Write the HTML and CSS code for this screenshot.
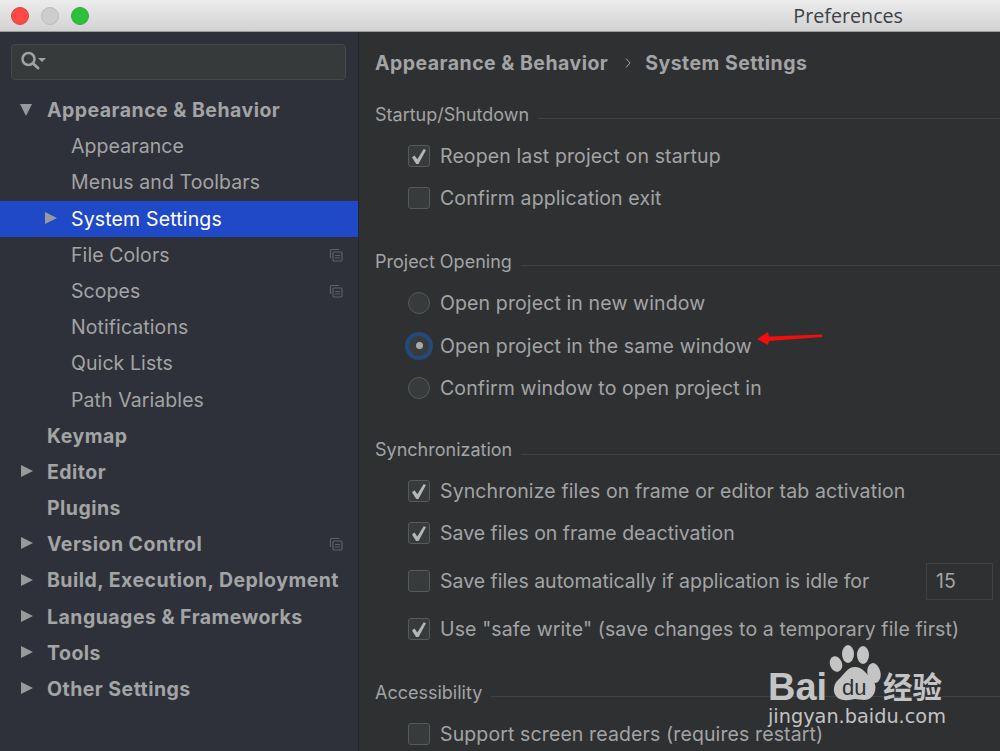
FILE: index.html
```html
<!DOCTYPE html>
<html lang="en">
<head>
<meta charset="utf-8">
<title>Preferences</title>
<link rel="stylesheet" href="styles.css">
</head>
<body>
<div class="window">
  <header class="titlebar">
    <div class="lights"><span class="light red"></span><span class="light grey"></span><span class="light green"></span></div>
    <div class="title">Preferences</div>
  </header>
  <div class="body">
    <aside class="sidebar">
      <div class="search">
        <svg class="search-icon" width="28" height="20" viewBox="0 0 28 20"><circle cx="7.500" cy="8" r="6" fill="none" stroke="#a0a2a3" stroke-width="2.500"/><path d="M12 12.500l5 4.500" stroke="#a0a2a3" stroke-width="3" stroke-linecap="round"/><path d="M17 7h8l-4 4z" fill="#a0a2a3"/></svg>
      </div>
      <nav class="tree">
        <div class="row top"><span class="arrow down"></span>Appearance &amp; Behavior</div>
        <div class="row sub">Appearance</div>
        <div class="row sub">Menus and Toolbars</div>
        <div class="row sub selected"><span class="arrow right"></span>System Settings</div>
        <div class="row sub">File Colors<svg class="copy" width="14" height="14" viewBox="0 0 14 14"><use href="#copy"/></svg></div>
        <div class="row sub">Scopes<svg class="copy" width="14" height="14" viewBox="0 0 14 14"><use href="#copy"/></svg></div>
        <div class="row sub">Notifications</div>
        <div class="row sub">Quick Lists</div>
        <div class="row sub">Path Variables</div>
        <div class="row top">Keymap</div>
        <div class="row top"><span class="arrow right"></span>Editor</div>
        <div class="row top">Plugins</div>
        <div class="row top"><span class="arrow right"></span>Version Control<svg class="copy" width="14" height="14" viewBox="0 0 14 14"><use href="#copy"/></svg></div>
        <div class="row top"><span class="arrow right"></span>Build, Execution, Deployment</div>
        <div class="row top"><span class="arrow right"></span>Languages &amp; Frameworks</div>
        <div class="row top"><span class="arrow right"></span>Tools</div>
        <div class="row top"><span class="arrow right"></span>Other Settings</div>
      </nav>
    </aside>
    <main class="content">
      <div class="crumbs"><span>Appearance &amp; Behavior</span><svg class="sep" width="6" height="12" viewBox="0 0 6 12"><path d="M1 1.500l4 4.500-4 4.500" fill="none" stroke="#a0a2a3" stroke-width="1"/></svg><span>System Settings</span></div>

      <section class="group first">
        <h2 class="heading"><span>Startup/Shutdown</span></h2>
        <div class="opt"><span class="check on"></span>Reopen last project on startup</div>
        <div class="opt"><span class="check"></span>Confirm application exit</div>
      </section>

      <section class="group opening">
        <h2 class="heading"><span>Project Opening</span></h2>
        <div class="opt"><span class="radio"></span>Open project in new window</div>
        <div class="opt"><span class="radio sel"></span>Open project in the same window<svg class="red-arrow" width="66" height="13" viewBox="0 0 66 13"><path d="M0 7L11 0l1 4.500L65 2.500l.500 2.500L12 9l-1 4z" fill="#f30d0d"/></svg></div>
        <div class="opt"><span class="radio"></span>Confirm window to open project in</div>
      </section>

      <section class="group sync">
        <h2 class="heading"><span>Synchronization</span></h2>
        <div class="opt"><span class="check on"></span>Synchronize files on frame or editor tab activation</div>
        <div class="opt tight"><span class="check on"></span>Save files on frame deactivation</div>
        <div class="opt idle tight"><span class="check"></span>Save files automatically if application is idle for<span class="num">15</span></div>
        <div class="opt safe"><span class="check on"></span>Use "safe write" (save changes to a temporary file first)</div>
      </section>

      <section class="group access">
        <h2 class="heading"><span>Accessibility</span></h2>
        <div class="opt"><span class="check"></span>Support screen readers (requires restart)</div>
      </section>
    </main>
  </div>
  <div class="watermark">
    <svg class="paw" width="52" height="58" viewBox="0 0 52 58"><g fill="#c4c4c4"><ellipse cx="7" cy="19" rx="6" ry="8" transform="rotate(-20 7 19)"/><ellipse cx="19" cy="9" rx="6" ry="9"/><ellipse cx="34" cy="10" rx="6" ry="9"/><ellipse cx="45" cy="28" rx="6.500" ry="10" transform="rotate(-12 45 28)"/><path d="M26 22c8 0 11 7 17 12 7 7 3 21-8 21-4 0-6-1-9-1s-6 2-11 1C4 54 2 42 9 35c6-5 9-13 17-13z"/></g></svg>
    <span class="wm-bai">Bai</span><span class="wm-du">du</span><span class="wm-cn">经验</span>
    <span class="wm-url">jingyan.baidu.com</span>
  </div>
</div>
<svg class="defs" width="0" height="0"><defs><g id="copy" fill="none" stroke="#5d6065" stroke-width="1.200"><path d="M10 1.500H2.500a1 1 0 0 0-1 1V10"/><rect x="4" y="4" width="9" height="9" rx="1"/><path d="M6 7.500h5M6 10h5"/></g></defs></svg>
</body>
</html>
```

FILE: styles.css
```css
* { box-sizing: border-box; }
html, body { margin: 0; height: 100%; }
body { font-family: Inter, "Liberation Sans", sans-serif; overflow: hidden; background: #2f3032; }
.window { position: relative; width: 1000px; height: 751px; overflow: hidden; display: flex; flex-direction: column; }

.titlebar { height: 32px; flex: none; position: relative; display: flex; align-items: center; padding-left: 11px; background: linear-gradient(#ececec, #d2d2d2); border-bottom: 1px solid #9a9a9a; }
.lights { display: flex; gap: 12px; }
.light { width: 18px; height: 18px; border-radius: 50%; }
.red { background: #fc4a46; border: 1px solid #e2403c; }
.grey { background: #cdcdcd; border: 1px solid #bcbcbc; }
.green { background: #2cc13a; border: 1px solid #28ae33; }
.title { margin-left: auto; margin-right: 97px; font-size: 19.700px; color: #3d4045; font-family: "Open Sans", sans-serif; line-height: 31px; }

.body { flex: 1; display: flex; min-height: 0; }
.sidebar { width: 359px; flex: none; background: #2e3139; border-right: 1px solid #24262a; padding-top: 12px; }
.search { margin: 0 12px 0 11px; height: 36px; border: 1px solid #46494a; border-radius: 4px; background: #373a3b; padding: 6px 0 0 9px; }
.search-icon { display: block; }
.tree { margin-top: 12px; }
.row { position: relative; height: 36.200px; line-height: 36.200px; font-size: 19.500px; color: #a3a4a5; white-space: nowrap; letter-spacing: .08px; }
.row.top { padding-left: 47px; font-weight: 700; letter-spacing: .47px; }
.row.sub { padding-left: 71px; }
.row.selected { background: #2049c7; color: #fff; letter-spacing: .16px; }
.arrow { position: absolute; top: 50%; width: 0; height: 0; }
.arrow.right { border-left: 12px solid #97999b; border-top: 6.500px solid transparent; border-bottom: 6.500px solid transparent; margin-top: -7px; left: 21px; }
.sub .arrow.right { left: 45px; }
.arrow.down { border-top: 12px solid #97999b; border-left: 6.500px solid transparent; border-right: 6.500px solid transparent; margin-top: -6px; left: 20px; }
.copy { position: absolute; right: 15px; top: 11px; }

.content { flex: 1; min-width: 0; padding: 16px 0 0 16px; color: #a3a4a5; font-size: 19.500px; letter-spacing: .12px; }
.crumbs { display: flex; align-items: center; height: 30px; font-weight: 700; font-size: 19.500px; white-space: nowrap; letter-spacing: .47px; }
.sep { margin: 0 14px 0 17px; }
.group { margin-top: 29px; }
.group.first { margin-top: 23px; }
.group.sync { margin-top: 28px; }
.group.access { margin-top: 26px; }
.heading { margin: 0; height: 26px; display: flex; align-items: center; font: inherit; font-size: 18px; letter-spacing: 0; white-space: nowrap; }
.heading span { margin-right: 9px; }
.heading::after { content: ""; flex: 1; height: 1px; background: #404244; margin-top: 9px; }
.opt { position: relative; display: flex; align-items: center; height: 42.200px; padding-left: 33px; white-space: nowrap; }
.opt.tight { letter-spacing: -.02px; }
.heading + .opt { margin-top: 8px; }
.sync .heading + .opt { margin-top: 7px; }
.check { width: 22px; height: 22px; border: 1px solid #57595b; border-radius: 3px; background: #373b3c; margin-right: 10px; flex: none; position: relative; }
.check.on::after { content: ""; position: absolute; left: 3px; top: 3px; width: 14px; height: 15px; background: #b5b6b7; clip-path: polygon(0 55%, 18% 42%, 38% 68%, 84% 0, 100% 6%, 46% 100%, 30% 100%); }
.radio { width: 22px; height: 22px; border: 1px solid #57595b; border-radius: 50%; background: #373b3c; margin-right: 10px; flex: none; position: relative; }
.radio.sel { box-shadow: 0 0 0 3px #25497b; border-color: #25497b; }
.radio.sel::after { content: ""; position: absolute; left: 6.500px; top: 6.500px; width: 7px; height: 7px; border-radius: 50%; background: #a8a9aa; }
.red-arrow { position: absolute; left: 382px; top: 7px; }
.idle { height: 48px; margin-top: 3px; }
.safe { height: 48px; }
.num { position: absolute; left: 551px; top: 6px; width: 67px; height: 37px; border: 1px solid #3f4143; padding-left: 9px; line-height: 35px; color: #a3a4a5; }

.watermark { position: absolute; left: 768px; top: 645px; width: 232px; height: 106px; }
.paw { position: absolute; left: 61px; top: 0; }
.wm-bai { position: absolute; left: 0; top: 20px; font: 700 38px/44px "Liberation Sans", sans-serif; color: #c4c4c4; }
.wm-du { position: absolute; left: 74px; top: 31px; font: 400 22px/24px "Liberation Sans", sans-serif; color: #2f3032; }
.wm-cn { position: absolute; left: 115px; top: 20px; font: 700 29.500px/40px "Noto Sans CJK SC", sans-serif; color: #c4c4c4; }
.wm-url { position: absolute; left: 0; top: 59px; font: 400 19.300px/26px "DejaVu Sans", sans-serif; color: #c4c4c4; }
.defs { position: absolute; }
```
